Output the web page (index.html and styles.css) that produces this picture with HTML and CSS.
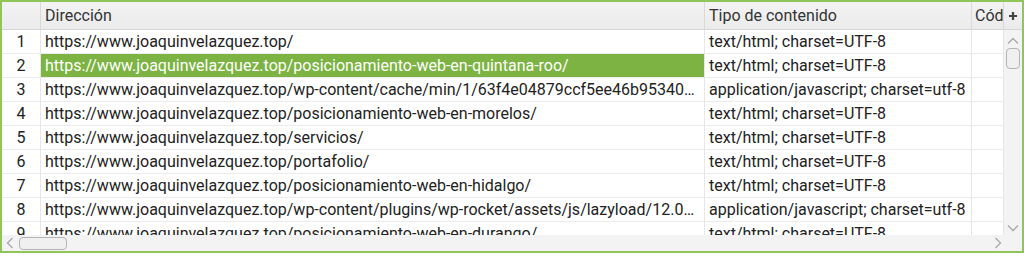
FILE: index.html
```html
<!DOCTYPE html>
<html lang="es">
<head>
<meta charset="utf-8">
<title>Tabla</title>
<link rel="stylesheet" href="styles.css">
</head>
<body>
<div class="frame">
  <div class="head">
    <div class="hc num"></div>
    <div class="hc dir">Dirección</div>
    <div class="hc tipo">Tipo de contenido</div>
    <div class="hc cod">Código de respuesta</div>
    <div class="hc plus"><svg width="10" height="10" viewBox="0 0 10 10"><path d="M5 1v8M1 5h8" stroke="#444" stroke-width="2.2"/></svg></div>
  </div>
  <div class="middle">
    <div class="rows">
      <div class="row"><div class="c num">1</div><div class="c dir">https://www.joaquinvelazquez.top/</div><div class="c tipo">text/html; charset=UTF-8</div><div class="c cod"></div></div>
      <div class="row"><div class="c num">2</div><div class="c dir sel">https://www.joaquinvelazquez.top/posicionamiento-web-en-quintana-roo/</div><div class="c tipo">text/html; charset=UTF-8</div><div class="c cod"></div></div>
      <div class="row"><div class="c num">3</div><div class="c dir">https://www.joaquinvelazquez.top/wp-content/cache/min/1/63f4e04879ccf5ee46b953401d2c8e7a.js</div><div class="c tipo">application/javascript; charset=utf-8</div><div class="c cod"></div></div>
      <div class="row"><div class="c num">4</div><div class="c dir">https://www.joaquinvelazquez.top/posicionamiento-web-en-morelos/</div><div class="c tipo">text/html; charset=UTF-8</div><div class="c cod"></div></div>
      <div class="row"><div class="c num">5</div><div class="c dir">https://www.joaquinvelazquez.top/servicios/</div><div class="c tipo">text/html; charset=UTF-8</div><div class="c cod"></div></div>
      <div class="row"><div class="c num">6</div><div class="c dir">https://www.joaquinvelazquez.top/portafolio/</div><div class="c tipo">text/html; charset=UTF-8</div><div class="c cod"></div></div>
      <div class="row"><div class="c num">7</div><div class="c dir">https://www.joaquinvelazquez.top/posicionamiento-web-en-hidalgo/</div><div class="c tipo">text/html; charset=UTF-8</div><div class="c cod"></div></div>
      <div class="row"><div class="c num">8</div><div class="c dir">https://www.joaquinvelazquez.top/wp-content/plugins/wp-rocket/assets/js/lazyload/12.0/lazyload.min.js</div><div class="c tipo">application/javascript; charset=utf-8</div><div class="c cod"></div></div>
      <div class="row"><div class="c num">9</div><div class="c dir">https://www.joaquinvelazquez.top/posicionamiento-web-en-durango/</div><div class="c tipo">text/html; charset=UTF-8</div><div class="c cod"></div></div>
    </div>
    <div class="vscroll">
      <svg class="arrow" width="12" height="8" viewBox="0 0 12 8"><path d="M1 6.5L6 1.5L11 6.5" fill="none" stroke="#a8a8a8" stroke-width="1.3"/></svg>
      <div class="vthumb"></div>
      <div class="vspace"></div>
      <svg class="arrow" width="12" height="8" viewBox="0 0 12 8"><path d="M1 1.5L6 6.5L11 1.5" fill="none" stroke="#a8a8a8" stroke-width="1.3"/></svg>
    </div>
  </div>
  <div class="bottom">
    <div class="hscroll">
      <svg class="harrow" width="8" height="12" viewBox="0 0 8 12"><path d="M6.5 1L1.5 6L6.5 11" fill="none" stroke="#a8a8a8" stroke-width="1.3"/></svg>
      <div class="hthumb"></div>
      <div class="hspace"></div>
      <svg class="harrow" width="8" height="12" viewBox="0 0 8 12"><path d="M1.5 1L6.5 6L1.5 11" fill="none" stroke="#a8a8a8" stroke-width="1.3"/></svg>
    </div>
    <div class="corner"></div>
  </div>
</div>
</body>
</html>
```

FILE: styles.css
```css
* { box-sizing: border-box; }
html, body { margin: 0; padding: 0; background: #ffffff; }
body {
  font-family: Roboto, "Liberation Sans", Arial, sans-serif;
  font-size: 16px;
  color: #222222;
}
.frame {
  width: 1024px;
  height: 253px;
  border: 2px solid #8fc65a;
  display: flex;
  flex-direction: column;
  background: #f3f3f3;
}
.head {
  display: flex;
  height: 28px;
  flex: none;
  background: linear-gradient(#f3f3f3, #ebebeb);
  border-bottom: 1px solid #d6d6d6;
}
.hc {
  height: 27px;
  line-height: 27px;
  border-right: 1px solid #d9d9d9;
  color: #333;
  white-space: nowrap;
  overflow: hidden;
  padding-left: 4px;
}
.num { width: 39px; flex: none; }
.dir { width: 664px; flex: none; }
.tipo { width: 267px; flex: none; }
.cod { width: 32px; flex: none; }
.hc.cod { padding-left: 3px; }
.hc.plus {
  width: 18px;
  flex: none;
  border-right: none;
  padding: 0;
  display: flex;
  align-items: center;
  justify-content: center;
}
.middle {
  display: flex;
  flex: 1;
  min-height: 0;
}
.rows {
  width: 1002px;
  flex: none;
  background: #ffffff;
  overflow: hidden;
}
.row {
  display: flex;
  height: 24px;
}
.c {
  height: 24px;
  line-height: 23px;
  border-right: 1px solid #e6e6e6;
  border-bottom: 1px solid #ececec;
  white-space: nowrap;
  overflow: hidden;
  padding-left: 4px;
}
.c.num { text-align: center; padding-left: 0; }
.c.dir { text-overflow: ellipsis; padding-right: 4px; }
.c.dir.sel {
  background: #7cb342;
  color: #ffffff;
}
.vscroll {
  width: 18px;
  flex: none;
  display: flex;
  flex-direction: column;
  align-items: center;
  padding: 7px 0 3px 0;
  background: #f3f3f3;
}
.arrow { flex: none; }
.vthumb {
  width: 14px;
  height: 21px;
  margin-top: 3px;
  border: 1px solid #b4b4b4;
  border-radius: 4px;
  background: #f0f0f0;
  flex: none;
}
.vspace { flex: 1; }
.bottom {
  display: flex;
  height: 16px;
  flex: none;
}
.hscroll {
  width: 1002px;
  display: flex;
  align-items: center;
  padding: 0 2px 0 4px;
  background: #f3f3f3;
}
.harrow { flex: none; }
.hthumb {
  width: 48px;
  height: 13px;
  margin-left: 5px;
  border: 1px solid #b4b4b4;
  border-radius: 4px;
  background: #f0f0f0;
}
.hspace { flex: 1; }
.corner { flex: 1; background: #f3f3f3; }
```
